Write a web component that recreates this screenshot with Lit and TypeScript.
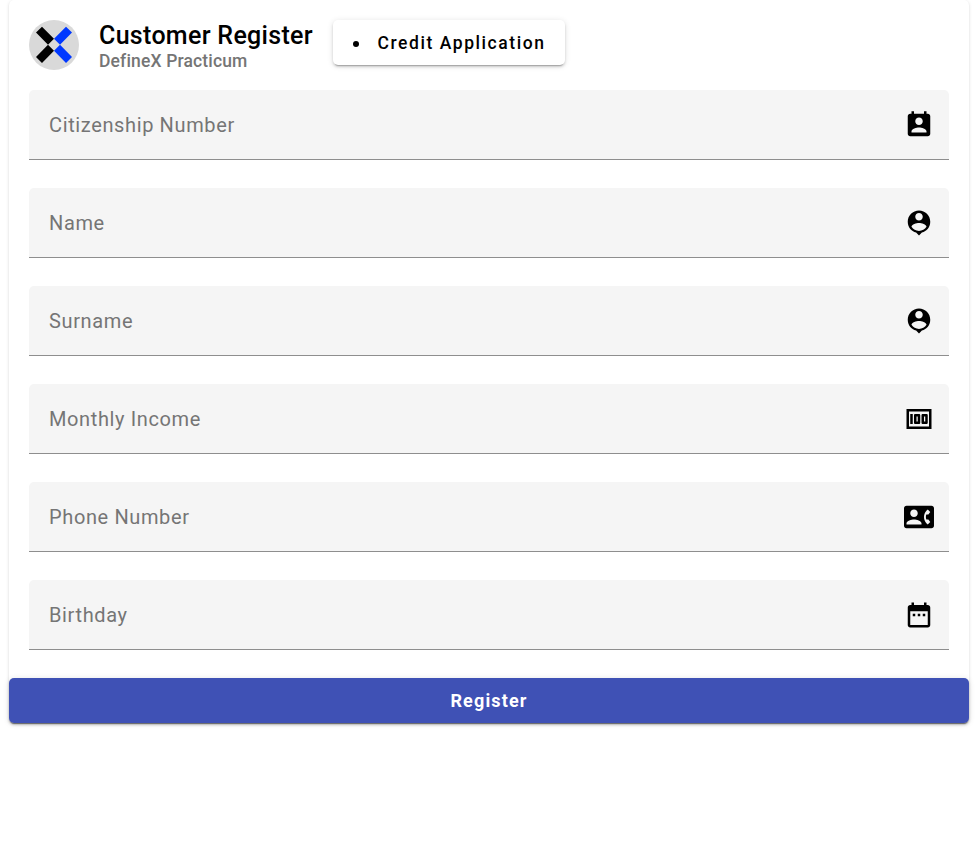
import { LitElement, html, css, svg } from "lit";
import { customElement, property } from "lit/decorators.js";

const icons: Record<string, string> = {
  assignment: "M19 3h-1V1h-2v2H8V1H6v2H5c-1.11 0-2 .9-2 2v14c0 1.1.89 2 2 2h14c1.1 0 2-.9 2-2V5c0-1.1-.9-2-2-2zm-7 3c1.66 0 3 1.34 3 3s-1.34 3-3 3-3-1.34-3-3 1.34-3 3-3zm6 12H6v-1c0-2 4-3.1 6-3.1s6 1.1 6 3.1v1z",
  pin: "M12 2c-4.97 0-9 4.03-9 9 0 4.17 2.84 7.67 6.69 8.69L12 22l2.31-2.31C18.16 18.67 21 15.17 21 11c0-4.97-4.03-9-9-9zm0 2c1.66 0 3 1.34 3 3s-1.34 3-3 3-3-1.34-3-3 1.34-3 3-3zm0 14.3c-2.5 0-4.71-1.28-6-3.22.03-1.99 4-3.08 6-3.08 1.99 0 5.97 1.09 6 3.08-1.29 1.94-3.5 3.22-6 3.22z",
  money: "M5 8h2v8H5zm7 0H9c-.55 0-1 .45-1 1v6c0 .55.45 1 1 1h3c.55 0 1-.45 1-1V9c0-.55-.45-1-1-1zm-1 6h-1v-4h1v4zm7-6h-3c-.55 0-1 .45-1 1v6c0 .55.45 1 1 1h3c.55 0 1-.45 1-1V9c0-.55-.45-1-1-1zm-1 6h-1v-4h1v4zM2 4v16h20V4H2zm2 14V6h16v12H4z",
  phone: "M22 3H2C.9 3 0 3.9 0 5v14c0 1.1.9 2 2 2h20c1.1 0 1.99-.9 1.99-2L24 5c0-1.1-.9-2-2-2zM8 6c1.66 0 3 1.34 3 3s-1.34 3-3 3-3-1.34-3-3 1.34-3 3-3zm6 12H2v-1c0-2 4-3.1 6-3.1s6 1.1 6 3.1v1zm3.85-4h1.64L21 16l-1.99 1.99c-1.31-.98-2.28-2.38-2.73-3.99-.18-.64-.28-1.31-.28-2s.1-1.36.28-2c.45-1.62 1.42-3.01 2.73-3.99L21 8l-1.51 2h-1.64c-.22.63-.35 1.3-.35 2s.13 1.37.35 2z",
  calendar: "M9 11H7v2h2v-2zm4 0h-2v2h2v-2zm4 0h-2v2h2v-2zm2-7h-1V2h-2v2H8V2H6v2H5c-1.11 0-1.99.9-1.99 2L3 20c0 1.1.89 2 2 2h14c1.1 0 2-.9 2-2V6c0-1.1-.9-2-2-2zm0 16H5V9h14v11z",
};

@customElement("form-field")
class FormField extends LitElement {
  @property() label = "";
  @property() icon = "";
  static styles = css`
    :host { display: flex; align-items: center; justify-content: space-between; box-sizing: border-box;
      height: 70px; padding: 0 15px 0 20px; background: #f5f5f5; border-bottom: 1px solid #8e8e8e;
      border-radius: 5px 5px 0 0; }
    .label { font-size: 20px; letter-spacing: 0.625px; color: #757575; line-height: 24px; }
    .icon { width: 30px; height: 30px; fill: #000; display: block; }
  `;
  render() {
    return html`<span class="label">${this.label}</span>
      <svg class="icon" viewBox="0 0 24 24">${svg`<path d=${icons[this.icon]}></path>`}</svg>`;
  }
}

@customElement("app-root")
class AppRoot extends LitElement {
  static styles = css`
    :host { display: block; font-family: Roboto, sans-serif; height: 842px; background: #fff; overflow: hidden; }
    .card { margin: 0 9px; height: 723px; border-radius: 5px; background: #fff;
      box-shadow: 0 2px 1px -1px rgba(0,0,0,.2), 0 1px 1px rgba(0,0,0,.14), 0 1px 3.75px rgba(0,0,0,.12); }
    .header { display: flex; height: 90px; box-sizing: border-box; padding: 20px 20px 0; }
    .avatar { width: 50px; height: 50px; flex: none; }
    .titles { margin: 0 20px; width: 214px; }
    .title { font-size: 25px; font-weight: 500; line-height: 31px; letter-spacing: .3125px; white-space: nowrap; }
    .subtitle { font-size: 17.5px; font-weight: 500; line-height: 20px; letter-spacing: .15px; color: #757575; white-space: nowrap; }
    .link { display: flex; align-items: center; box-sizing: border-box; width: 232px; height: 45px; padding-left: 20px;
      border-radius: 5px; font-size: 17.5px; font-weight: 500; letter-spacing: 1.5625px;
      box-shadow: 0 3px 1px -2px rgba(0,0,0,.2), 0 2px 2.5px rgba(0,0,0,.14), 0 1px 6px rgba(0,0,0,.12); }
    .dot { width: 6px; height: 6px; border-radius: 50%; background: #000; margin: 2px 18.5px 0 0; }
    .fields { display: grid; gap: 28px; padding: 0 20px 28px; }
    .register { display: flex; align-items: center; justify-content: center; height: 45px; border-radius: 5px;
      background: #3f51b5; color: #fff; font-size: 18px; font-weight: 700; letter-spacing: 1.15px;
      box-shadow: 0 3px 1px -2px rgba(0,0,0,.2), 0 2px 2.5px rgba(0,0,0,.14), 0 1px 6px rgba(0,0,0,.12); }
  `;
  render() {
    return html`<div class="card">
      <div class="header">
        <svg class="avatar" viewBox="0 0 50 50">
          <circle cx="25" cy="25" r="25" fill="#d9d9d9"></circle>
          <path d="M7 12.5L13 6.7L25 18.7L19 24.8ZM7 37L13 43L25 30.8L19 24.8Z" fill="#000"></path>
          <path d="M43 12.5L37 6.7L25 18.7L31 24.8ZM43 37L37 43L25 30.8L31 24.8Z" fill="#0038ff"></path>
        </svg>
        <div class="titles"><div class="title">Customer Register</div><div class="subtitle">DefineX Practicum</div></div>
        <div class="link"><span class="dot"></span><span>Credit Application</span></div>
      </div>
      <div class="fields">
        <form-field label="Citizenship Number" icon="assignment"></form-field>
        <form-field label="Name" icon="pin"></form-field>
        <form-field label="Surname" icon="pin"></form-field>
        <form-field label="Monthly Income" icon="money"></form-field>
        <form-field label="Phone Number" icon="phone"></form-field>
        <form-field label="Birthday" icon="calendar"></form-field>
      </div>
      <div class="register">Register</div>
    </div>`;
  }
}
